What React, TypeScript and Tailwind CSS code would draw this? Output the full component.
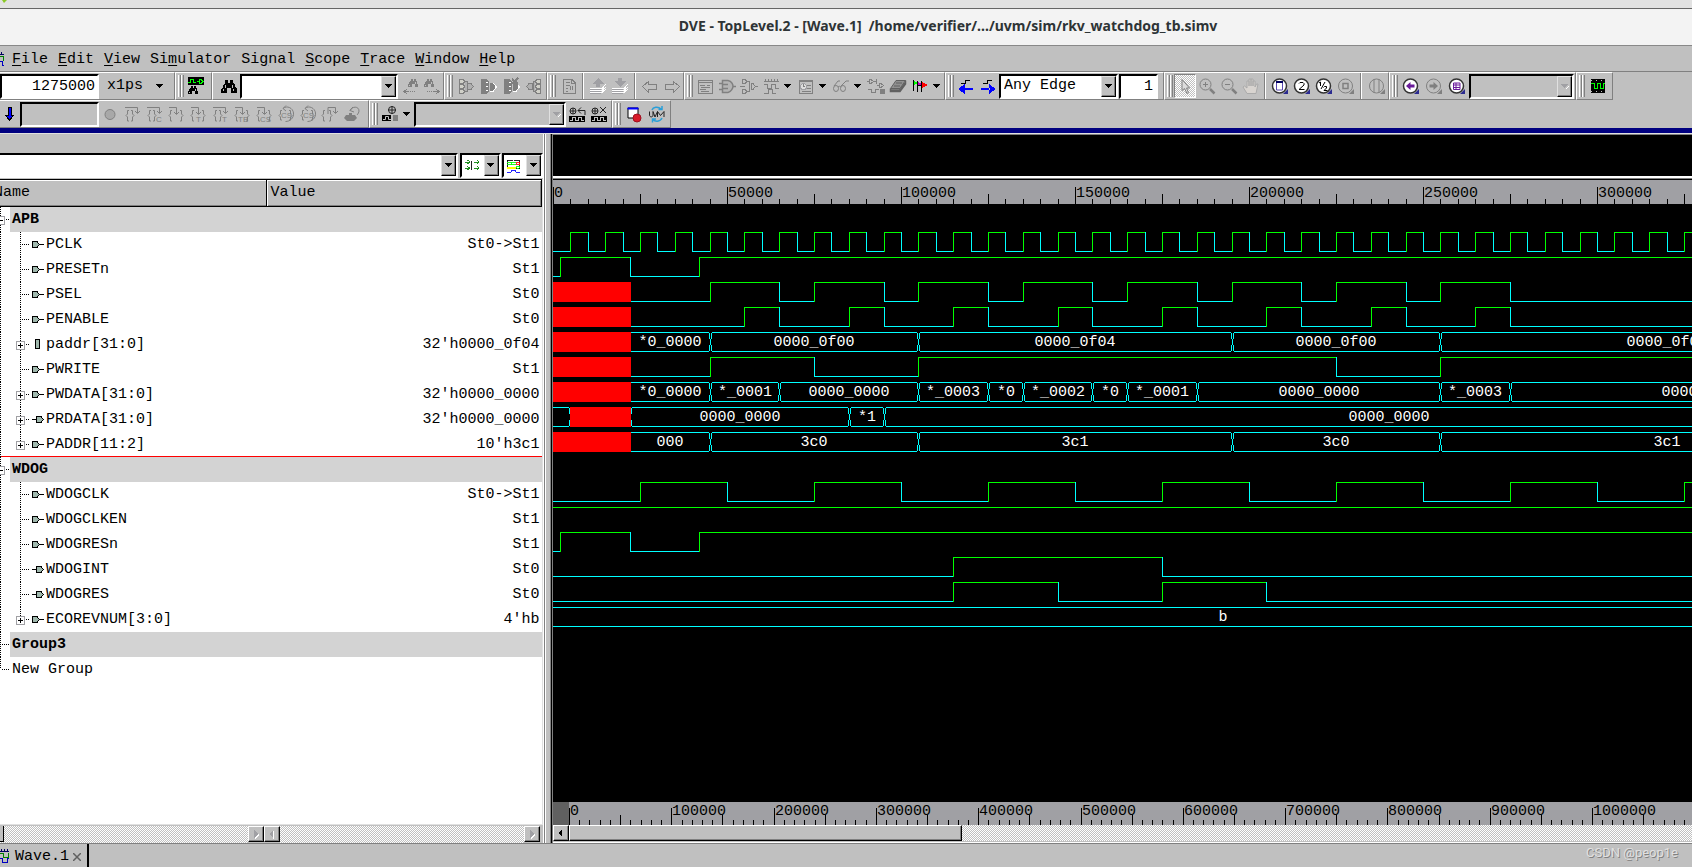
import type { ReactNode } from "react";
import clsx from "clsx";

type BusValue = [start: number, label: string];

type Signal = {
  name: string;
  value: string;
  port: "in" | "out" | "reg";
  /** times (ns) at which a one bit signal toggles, starting low */
  edges?: number[];
  bus?: BusValue[];
  unknown?: [number, number];
};

type Group = { name: string; signals: Signal[] };

const PX_PER_NS = 3.48;
const END = 385;

function clock(first: number, half: number) {
  const edges: number[] = [];
  for (let t = first; t < END; t += half) edges.push(t);
  return edges;
}

const groups: Group[] = [
  {
    name: "APB",
    signals: [
      { name: "PCLK", value: "St0->St1", port: "in", edges: clock(5, 5) },
      { name: "PRESETn", value: "St1", port: "in", edges: [2, 22, 42] },
      {
        name: "PSEL",
        value: "St0",
        port: "in",
        unknown: [0, 22],
        edges: [45, 65, 75, 95, 105, 125, 135, 155, 165, 185, 195, 215, 225, 245, 255, 275],
      },
      {
        name: "PENABLE",
        value: "St0",
        port: "in",
        unknown: [0, 22],
        edges: [55, 65, 85, 95, 115, 125, 145, 155, 175, 185, 205, 215, 235, 245, 265, 275],
      },
      {
        name: "paddr[31:0]",
        value: "32'h0000_0f04",
        port: "reg",
        unknown: [0, 22],
        bus: [[22, "*0_0000"], [45, "0000_0f00"], [105, "0000_0f04"], [195, "0000_0f00"], [255, "0000_0f04"]],
      },
      { name: "PWRITE", value: "St1", port: "in", unknown: [0, 22], edges: [45, 75, 105, 225, 255] },
      {
        name: "PWDATA[31:0]",
        value: "32'h0000_0000",
        port: "in",
        unknown: [0, 22],
        bus: [
          [22, "*0_0000"], [45, "*_0001"], [65, "0000_0000"], [105, "*_0003"], [125, "*0"], [135, "*_0002"],
          [155, "*0"], [165, "*_0001"], [185, "0000_0000"], [255, "*_0003"], [275, "0000_0000"],
        ],
      },
      {
        name: "PRDATA[31:0]",
        value: "32'h0000_0000",
        port: "out",
        unknown: [5, 22],
        bus: [[0, ""], [5, ""], [22, "0000_0000"], [85, "*1"], [95, "0000_0000"]],
      },
      {
        name: "PADDR[11:2]",
        value: "10'h3c1",
        port: "in",
        unknown: [0, 22],
        bus: [[22, "000"], [45, "3c0"], [105, "3c1"], [195, "3c0"], [255, "3c1"]],
      },
    ],
  },
  {
    name: "WDOG",
    signals: [
      { name: "WDOGCLK", value: "St0->St1", port: "in", edges: clock(25, 25) },
      { name: "WDOGCLKEN", value: "St1", port: "in", edges: [-5] },
      { name: "WDOGRESn", value: "St1", port: "in", edges: [2, 22, 42] },
      { name: "WDOGINT", value: "St0", port: "out", edges: [115, 175] },
      { name: "WDOGRES", value: "St0", port: "out", edges: [115, 145, 175, 205] },
      { name: "ECOREVNUM[3:0]", value: "4'hb", port: "in", bus: [[0, "b"]] },
    ],
  },
  { name: "Group3", signals: [] },
];

const toX = (t: number) => Math.round(t * PX_PER_NS) + 0.5;

/* ---------- waveforms ---------- */

function BitWave({ edges = [], unknown }: Signal) {
  const start = unknown ? unknown[1] : 0;
  const points = [start, ...edges, END];
  return (
    <>
      {points.slice(0, -1).map((t, i) => {
        const high = i % 2 === 1;
        const y = high ? 1.5 : 20.5;
        const x = i === 0 ? Math.floor(toX(t)) : toX(t);
        return (
          <path
            key={i}
            d={i === 0 ? `M${x} ${y}H${toX(points[i + 1])}` : `M${x} ${high ? 21 : 1}V${y}H${toX(points[i + 1])}`}
            stroke={high ? "#00ff00" : "#00ffff"}
            fill="none"
          />
        );
      })}
    </>
  );
}

function BusWave({ bus = [] }: Signal) {
  return (
    <>
      {bus.map(([t, label], i) => {
        const end = i + 1 < bus.length ? bus[i + 1][0] : END;
        const a = toX(t);
        const b = toX(end);
        const gap = i === 0 ? 0 : 2;
        return (
          <g key={t}>
            <path d={`M${a + gap - 0.5} 1.5H${b - 1.5}M${a + gap - 0.5} 20.5H${b - 1.5}`} stroke="#00ffff" />
            {i > 0 && (
              <path
                d={`M${a - 1} 2V5M${a - 1} 5L${a + 1} 17V20M${a + 1} 2V5L${a - 1} 17V20`}
                stroke="#00ffff"
                fill="none"
              />
            )}
            <text x={Math.floor((a + b) / 2)} y="15" fill="#fff" textAnchor="middle" fontSize="15">
              {label}
            </text>
          </g>
        );
      })}
    </>
  );
}

function WaveRow({ signal }: { signal: Signal }) {
  const { unknown, bus } = signal;
  return (
    <svg className="block h-[25px] w-full" shapeRendering="crispEdges" role="img" aria-label={`${signal.name} wave`}>
      {bus ? <BusWave {...signal} /> : <BitWave {...signal} />}
      {unknown && (
        <rect
          x={Math.floor(toX(unknown[0]))}
          y="1"
          width={Math.floor(toX(unknown[1])) - Math.floor(toX(unknown[0])) + 1}
          height="20"
          fill="#ff0000"
        />
      )}
    </svg>
  );
}

function Ruler({ step, pitch, count, height, baseline }: { step: number; pitch: number; count: number; height: number; baseline: number }) {
  const ticks = Array.from({ length: count * 10 }, (_, i) => i);
  return (
    <svg className="block h-full min-w-0 flex-1" shapeRendering="crispEdges" role="img" aria-label="Time ruler">
      {ticks.map((i) => {
        const x = Math.round((i * pitch) / 10) + 0.5;
        const h = i % 10 === 0 ? 17 : i % 5 === 0 ? 10 : 5;
        return <path key={i} d={`M${x} ${height}V${height - h}`} stroke="#000" />;
      })}
      {ticks.filter((i) => i % 10 === 0).map((i) => (
        <text key={i} x={Math.round((i * pitch) / 10) + 1} y={baseline} fontSize="15">
          {(i / 10) * step}
        </text>
      ))}
    </svg>
  );
}

/* ---------- signal tree ---------- */

function TreeBranch({ signal, last }: { signal: Signal; last: boolean }) {
  return (
    <svg className="h-[25px] w-[46px] shrink-0" shapeRendering="crispEdges" aria-hidden="true">
      <path d="M.5 0V25" stroke="#000" strokeDasharray="1 1" />
      <path d={last ? "M20.5 0V13" : "M20.5 0V25"} stroke="#000" strokeDasharray="1 1" />
      <path d="M22 12.5H30" stroke="#000" strokeDasharray="1 1" />
      {signal.bus && (
        <>
          <rect x="16.5" y="9.5" width="8" height="8" fill="#fff" stroke="#a0a0a4" />
          <path d="M18 13.5H23M20.5 11V16" stroke="#000" />
        </>
      )}
      {signal.port === "in" && (
        <path d="M32.5 9.5H37L39.5 12.5L37 15.5H32.5ZM39.5 12.5H44" fill="#9fb8ad" stroke="#000" />
      )}
      {signal.port === "out" && (
        <path d="M32 12.5H36M36.5 9.5H41L43.5 12.5L41 15.5H36.5Z" fill="#9fb8ad" stroke="#000" />
      )}
      {signal.port === "reg" && <rect x="35.5" y="7.5" width="4" height="9" fill="#9fb8ad" stroke="#000" />}
    </svg>
  );
}

function GroupBranch({ open, last }: { open?: boolean; last?: boolean }) {
  return (
    <svg className="h-[25px] w-[10px] shrink-0 bg-white" shapeRendering="crispEdges" aria-hidden="true">
      <path d={last ? "M.5 0V12" : "M.5 0V25"} stroke="#000" strokeDasharray="1 1" />
      <path d="M2 12.5H9" stroke="#000" strokeDasharray="1 1" />
      {open && (
        <>
          <rect x="-3.5" y="9.5" width="8" height="8" fill="#fff" stroke="#a0a0a4" />
          <path d="M0 13.5H3" stroke="#000" />
        </>
      )}
    </svg>
  );
}

function SignalTable() {
  return (
    <table className="w-full table-fixed border-collapse text-left">
      <thead>
        <tr className="h-[27px] border-y border-black bg-[#c0c0c0]">
          <th className="w-[266px] border-r border-black p-0 font-normal shadow-[inset_0_1px_0_#fff,inset_0_-1px_0_#808080]">
            <span className="-ml-1.5">Name</span>
          </th>
          <th className="border-r border-black p-0 pl-1 font-normal shadow-[inset_1px_1px_0_#fff,inset_-1px_-1px_0_#808080]">
            Value
          </th>
        </tr>
      </thead>
      {groups.map((group, index) => (
        <tbody key={group.name}>
          <tr>
            <td className={clsx("h-[25px] bg-[#d3d3d3] p-0", index === 1 && "shadow-[0_-1px_0_#f00]")}>
              <div className="flex items-center font-bold">
                <GroupBranch open={group.signals.length > 0} />
                <span className="pl-0.5">{group.name}</span>
              </div>
            </td>
            <td className={clsx("h-[25px] bg-[#d3d3d3] p-0", index === 1 && "shadow-[0_-1px_0_#f00]")} />
          </tr>
          {group.signals.map((signal, i) => (
            <tr key={signal.name}>
              <td className="h-[25px] p-0">
                <div className="flex items-center">
                  <TreeBranch signal={signal} last={i === group.signals.length - 1} />
                  <span>{signal.name}</span>
                </div>
              </td>
              <td className="h-[25px] p-0 pr-0.5 text-right">{signal.value}</td>
            </tr>
          ))}
        </tbody>
      ))}
      <tbody>
        <tr>
          <td className="h-[25px] p-0">
            <div className="flex items-center">
              <GroupBranch last />
              <span className="pl-0.5">New Group</span>
            </div>
          </td>
          <td />
        </tr>
      </tbody>
    </table>
  );
}

/* ---------- toolbar parts ---------- */

function Caret({ disabled }: { disabled?: boolean }) {
  return (
    <svg width="8" height="5" viewBox="0 0 8 5" shapeRendering="crispEdges" aria-hidden="true">
      {disabled && <path d="M5 4L8 1V3L5 5Z" fill="#fff" />}
      <path d="M0 0H7L3.5 4Z" fill={disabled ? "#a0a0a4" : "#000"} />
    </svg>
  );
}

function Combo({
  label,
  value = "",
  className,
  disabled,
  children,
}: {
  label: string;
  value?: string;
  className: string;
  disabled?: boolean;
  children?: ReactNode;
}) {
  return (
    <span
      className={clsx(
        "flex h-[25px] shrink-0 items-stretch border-2 border-t-black border-l-black border-r-white border-b-white",
        disabled ? "bg-[#c0c0c0]" : "bg-white",
        className,
      )}
    >
      {children}
      <select
        aria-label={label}
        disabled={disabled}
        className="min-w-0 flex-1 appearance-none bg-transparent pl-[3px] leading-5 text-black outline-none"
      >
        <option>{value}</option>
      </select>
      <span className="pointer-events-none flex w-[15px] shrink-0 items-center justify-center border border-t-[#e0e0e0] border-r-black border-b-black border-l-[#e0e0e0] bg-[#c0c0c0] shadow-[inset_-1px_-1px_0_#808080]">
        <Caret disabled={disabled} />
      </span>
    </span>
  );
}

function ToolGroup({ children, handle = true, className }: { children: ReactNode; handle?: boolean; className?: string }) {
  return (
    <div
      className={clsx(
        "flex h-7 shrink-0 items-center border-t border-r border-b border-t-white border-r-[#808080] border-b-[#808080]",
        handle && "border-l border-l-white",
        className,
      )}
    >
      {handle && (
        <span className="mr-px ml-0.5 flex h-[22px] w-[6px] shrink-0">
          <span className="w-[3px] border-r border-l border-l-white border-r-[#808080]" />
          <span className="w-[3px] border-r border-l border-l-white border-r-[#808080]" />
        </span>
      )}
      {children}
    </div>
  );
}

function Tool({ label, children, className = "w-[22px]" }: { label: string; children: ReactNode; className?: string }) {
  return (
    <button type="button" aria-label={label} title={label} className={clsx("flex h-[22px] shrink-0 items-center justify-center", className)}>
      {children}
    </button>
  );
}

function Drop({ label }: { label: string }) {
  return (
    <button type="button" aria-label={label} className="flex h-[22px] w-[13px] shrink-0 items-center pl-0.5">
      <Caret />
    </button>
  );
}

function Divider({ className }: { className?: string }) {
  return <span className={clsx("h-[26px] w-0.5 shrink-0 border-r border-l border-l-[#808080] border-r-white", className)} />;
}

function Icon({ children, crisp = true }: { children: ReactNode; crisp?: boolean }) {
  return (
    <svg
      width="18"
      height="18"
      viewBox="0 0 18 18"
      fill="none"
      stroke="#808080"
      shapeRendering={crisp ? "crispEdges" : "auto"}
      aria-hidden="true"
    >
      {children}
    </svg>
  );
}

function Binoculars({ color, x = 0, y = 0, size = 1 }: { color: string; x?: number; y?: number; size?: number }) {
  return (
    <g transform={`translate(${x} ${y}) scale(${size})`} stroke="none">
      <path d="M4 1H7V4H9V1H12V4L14 6V8L16 10V14H10V9H6V14H0V10L2 8V6L4 4Z" fill={color} />
      <path d="M4 6H5V9H4ZM2 10H3V12H2ZM11 6H12V9H11ZM12 10H13V12H12Z" fill="#c0c0c0" />
    </g>
  );
}

/** Source stepping icon: a pair of braces with a curved arrow and a suffix. */
function StepIcon({ mode, sub = "" }: { mode: "over" | "into" | "out" | "loop"; sub?: string }) {
  return (
    <Icon crisp={false}>
      {mode === "over" && (
        <>
          <path d="M2 2.5H14.5V8M12 6L14.5 8.5L17 6" />
          <path d="M6 5.5H4.5V9L3 10.5L4.5 12V16H6M8 5.5H9.5V9L11 10.5L9.5 12V16H8" />
        </>
      )}
      {mode === "into" && (
        <>
          <path d="M2 2.5H9.5V9M7 7L9.5 9.5L12 7" />
          <path d="M5 5.5H3.5V9L2 10.5L3.5 12V16H5M13 5.5H14.5V9L16 10.5L14.5 12V16H13" />
        </>
      )}
      {mode === "out" && (
        <>
          <path d="M7 9V2.5H14.5V8M12 6L14.5 8.5L17 6" />
          <path d="M4 5.5H2.5V9L1 10.5L2.5 12V16H4M8 5.5H9.5V9L11 10.5L9.5 12V16H8" />
        </>
      )}
      {mode === "loop" && (
        <>
          <path d="M6 3.5C10 0 16 3 16.5 8C17 13 13 16.5 8.5 16.5M9 .5L6 3.5L9 6" />
          <path d="M5 5.5H3.5V9L2 10.5L3.5 12V15H5M12 5.5H13.5V9L15 10.5L13.5 12V15H12" />
        </>
      )}
      {sub && (
        <text
          x={mode === "loop" ? 4 : mode === "over" ? 11 : sub.length > 1 ? 5 : 7}
          y={mode === "loop" ? 13 : 17}
          fontSize="8"
          fill="#808080"
          stroke="none"
          className="font-[Liberation_Sans,sans-serif]"
        >
          {sub}
        </text>
      )}
    </Icon>
  );
}

function Lens({ active, children }: { active?: boolean; children: ReactNode }) {
  return (
    <Icon crisp={false}>
      <circle cx="8.5" cy="9" r="7" fill={active ? "#fff" : "none"} stroke={active ? "#333" : "#808080"} strokeWidth={active ? 1.5 : 1} />
      <path d="M17 12V17H12Z" fill={active ? "#2b2b90" : "#808080"} stroke="none" />
      {children}
    </Icon>
  );
}

function GateFan({ flip }: { flip?: boolean }) {
  return (
    <Icon>
      <g transform={flip ? "matrix(-1 0 0 1 18 0)" : undefined}>
        <path d="M2.5 2.5H6L8 4.5L6 6.5H2.5ZM2.5 7.5H6L8 9.5L6 11.5H2.5ZM2.5 12.5H6L8 14.5L6 16.5H2.5Z" fill="#d0d0c8" />
        <path d="M8 4.5H10V14.5H8M10.5 6.5H14L16.5 9.5L14 12.5H10.5Z" fill="#b0b0b0" />
      </g>
    </Icon>
  );
}

function GateSolid({ cut }: { cut?: boolean }) {
  return (
    <Icon>
      <path d="M1 2H6L9 5V14L6 17H1Z" fill="#808080" stroke="none" />
      <path d="M5.5 5.5H8M5.5 9.5H8M5.5 13.5H8M10 6.5H13L16.5 10L13 14.5H9.5" stroke="#fff" />
      <path d="M10 6H12L15 9V11L12 14H10Z" fill="#808080" stroke="none" />
      {cut && <path d="M9 2L15 7M15 1L9 7" strokeWidth="2" />}
    </Icon>
  );
}

function Stack({ up }: { up?: boolean }) {
  return (
    <Icon>
      <path d={up ? "M9 1L15 7H11V10H7V7H3Z" : "M7 1H11V4H15L9 10L3 4H7Z"} fill="#a0a0a4" stroke="none" />
      <path d="M1 11.5H13L17 7M1 13.5H13L17 10M1 15.5H13L17 12" stroke="#fff" />
      <path d="M1 12.5H12M1 14.5H12M1 16.5H12" stroke="#a0a0a4" />
    </Icon>
  );
}

function WaveProbe({ cross }: { cross?: boolean }) {
  return (
    <Icon crisp={false}>
      <circle cx="5" cy="6" r="3" stroke="#222" />
      <path d="M5 3V9M2 6H8" stroke="#222" />
      <path d={cross ? "M10 2L16 8M16 2L10 8" : "M17 10V5.5H10M13 2.5L10 5.5L13 8.5"} stroke="#222" />
      <path d="M1 11H17V17H1Z" fill="#000" stroke="none" />
      <path d="M2 15.5H4.5V12.5H7.5V15.5H10.5V12.5H13.5V15.5H16" stroke="#c0c0c0" shapeRendering="crispEdges" />
    </Icon>
  );
}

function EdgeArrow({ next }: { next?: boolean }) {
  return (
    <Icon>
      <path d="M4 6.5H8.5V3.5H13" stroke="#000" />
      <path d={next ? "M17 12L10 7V17ZM2 11H11V13H2Z" : "M1 12L8 7V17ZM7 11H16V13H7Z"} fill="#00f" stroke="none" />
    </Icon>
  );
}

function WaveLogo() {
  return (
    <svg width="9" height="16" viewBox="0 0 9 16" fill="none" shapeRendering="crispEdges" aria-hidden="true">
      <path d="M0 2.5H9M1.5 0V3M4.5 0V3M7.5 0V3" stroke="#000060" />
      <path d="M0 4.5H3.5V8.5H8V4" stroke="#008000" />
      <path d="M0 9.5H2.5V13.5H7V9.5H9" stroke="#0000c0" />
    </svg>
  );
}

/* ---------- toolbars ---------- */

function MainToolbar() {
  return (
    <div className="flex h-7 overflow-hidden" role="toolbar" aria-label="Main">
      <ToolGroup handle={false} className="w-[175px]">
        <input
          aria-label="Time"
          defaultValue="1275000"
          className="h-[25px] w-[99px] border-2 border-t-black border-r-white border-b-white border-l-black bg-white pr-0.5 text-right outline-none"
        />
        <button type="button" className="flex h-[22px] items-center gap-[13px] pl-2">
          x1ps
          <Caret />
        </button>
      </ToolGroup>
      <ToolGroup className="w-[37px]">
        <Tool label="Find signals">
          <Icon>
            <path d="M1 0H17V8H1Z" fill="#000" stroke="none" />
            <path d="M1 5.5H3.5V2.5H6.5V5.5H9M10 4.5H12V2.5H14L16 4.5L14 6.5H12V4.5" stroke="#0f0" />
            <Binoculars color="#000" x={1} y={8} size={0.65} />
          </Icon>
        </Tool>
      </ToolGroup>
      <ToolGroup handle={false} className="w-[232px] border-l border-l-white pl-[5px]">
        <Tool label="Find">
          <Icon>
            <Binoculars color="#000" x={1} y={2} />
          </Icon>
        </Tool>
        <Combo label="Find text" className="w-[158px]" />
        <Tool label="Find previous" className="ml-0.5 w-[22px]">
          <Icon>
            <Binoculars color="#808080" x={6} y={1} size={0.65} />
            <path d="M2 14.5H7" />
            <path d="M8 14.5H14" strokeDasharray="1 1" />
            <path d="M5 12L2 14.5L5 17" />
          </Icon>
        </Tool>
        <Tool label="Find next" className="w-[20px]">
          <Icon>
            <Binoculars color="#808080" x={1} y={1} size={0.65} />
            <path d="M4 14.5H11" strokeDasharray="1 1" />
            <path d="M10 14.5H16M13 12L16 14.5L13 17" />
          </Icon>
        </Tool>
      </ToolGroup>
      <ToolGroup className="w-[103px]">
        <Tool label="Trace drivers" className="w-[23px]"><GateFan /></Tool>
        <Tool label="Trace loads" className="w-[23px]"><GateSolid /></Tool>
        <Tool label="Clear trace" className="w-[23px]"><GateSolid cut /></Tool>
        <Tool label="Fan out"><GateFan flip /></Tool>
      </ToolGroup>
      <ToolGroup className="w-[137px]">
        <Tool label="Show source" className="w-[23px]">
          <Icon>
            <path d="M3.5 2.5H12L15.5 6V16.5H3.5ZM11.5 2.5V6.5H15.5M6 5.5H10M6 8.5H10M6 11.5H8M6 14.5H8M10.5 9V13M12.5 9V13" />
          </Icon>
        </Tool>
        <Divider className="ml-0.5" />
        <Tool label="Move up" className="ml-[3px] w-[22px]"><Stack up /></Tool>
        <Tool label="Move down"><Stack /></Tool>
        <Divider className="ml-[3px]" />
        <Tool label="Back" className="ml-0.5 w-[23px]">
          <Icon><path d="M1.5 9.5L7.5 4.5V7.5H15.5V12.5H7.5V15.5Z" /></Icon>
        </Tool>
        <Tool label="Forward">
          <Icon><path d="M16.5 9.5L10.5 4.5V7.5H2.5V12.5H10.5V15.5Z" /></Icon>
        </Tool>
      </ToolGroup>
      <ToolGroup className="w-[261px]">
        <Tool label="New source view">
          <Icon><path d="M2.5 3.5H16.5V16.5H2.5ZM2.5 5.5H16.5M4 8.5H9M5 10.5H14M4 12.5H10M5 14.5H13M11 8.5H14" /></Icon>
        </Tool>
        <Tool label="New schematic view">
          <Icon crisp={false}>
            <path d="M4.5 3.5H10C14 4 15 8 15 9.5C15 11 13 15 10 15.5H4.5ZM1 6.5H4M1 12.5H4M15 9.5H18M5 7.5H10M5 11.5H10" strokeWidth="1.5" fill="#b4b4b4" />
          </Icon>
        </Tool>
        <Tool label="New path schematic">
          <Icon>
            <path d="M2.5 2.5H5L7 4.5L5 6.5H2.5ZM2.5 12.5H5L7 14.5L5 16.5H2.5ZM7 4.5H9.5V14.5H7M11.5 6.5H13L15.5 9.5L13 12.5H11.5ZM0 9.5H5M15.5 9.5H18" />
          </Icon>
        </Tool>
        <Tool label="New wave view">
          <Icon>
            <path d="M2 4.5H17M3.5 2V5M6.5 2V5M9.5 2V5M12.5 2V5M15.5 2V5" />
            <path d="M2 7.5H5.5V11.5H9.5V7.5H13.5V11.5H17M2 16.5H6.5V12.5H10.5V16.5H14" />
          </Icon>
        </Tool>
        <Drop label="Wave view menu" />
        <Tool label="New list view">
          <Icon>
            <path d="M2 3H16V5H2Z" fill="#808080" stroke="none" />
            <path d="M2.5 3.5H15.5V16.5H2.5ZM10 8.5H14M10 11.5H14M5 14.5H14" />
            <circle cx="6.5" cy="9.5" r="3" fill="#ddd" stroke="#a0a0a4" />
            <path d="M6.5 7V9.5H8" />
          </Icon>
        </Tool>
        <Drop label="List view menu" />
        <Tool label="Watch">
          <Icon crisp={false}>
            <path d="M2 9L6 4H8M9 9L14 4H17" />
            <ellipse cx="4" cy="11.5" rx="2.5" ry="3" />
            <ellipse cx="11" cy="11.5" rx="2.5" ry="3" />
            <path d="M6 10C7 9 8 9 9 10" />
          </Icon>
        </Tool>
        <Drop label="Watch menu" />
        <Tool label="Group signals">
          <Icon>
            <path d="M2.5 2.5H4L6.5 4.5L4 6.5H2.5ZM0 4.5H2M7 4.5H9.5M9.5 2V7M12.5 6.5H14L16.5 8.5L14 10.5H12.5ZM9.5 8.5H12" />
            <path d="M1 12.5H4.5V15.5H8.5V12.5H12" />
            <path d="M13 12H17V16H13Z" fill="#808080" />
          </Icon>
        </Tool>
        <Tool label="Memory view">
          <Icon crisp={false}>
            <path d="M7 3.5H16.5L11 11.5H1.5Z" fill="#909090" stroke="#606060" />
            <path d="M1.5 11.5V14.5H11L16.5 7V3.5M11 11.5V14.5M2 13H11L16 6" stroke="#606060" strokeWidth="1.5" />
            <path d="M7 6H13M5 9H11" stroke="#606060" />
          </Icon>
        </Tool>
        <Tool label="Markers">
          <Icon>
            <path d="M2 3L7 6L2 9Z" fill="#0f0" stroke="none" />
            <path d="M6 4L11 7L6 10Z" fill="#c000c0" stroke="none" />
            <path d="M11 5L17 8L11 11Z" fill="#f00" stroke="none" />
            <path d="M2.5 3V14M6.500 4V15M10.500 4V15M7 8.500H10" stroke="#000" />
          </Icon>
        </Tool>
        <Drop label="Marker menu" />
      </ToolGroup>
      <ToolGroup className="w-[219px]">
        <Tool label="Previous edge"><EdgeArrow /></Tool>
        <Tool label="Next edge"><EdgeArrow next /></Tool>
        <Combo label="Edge type" value="Any Edge" className="w-[119px]" />
        <input
          aria-label="Edge count"
          defaultValue="1"
          className="ml-px h-[25px] w-[39px] border-2 border-t-black border-r-white border-b-white border-l-black bg-white pr-[3px] text-right outline-none"
        />
      </ToolGroup>
      <ToolGroup className="w-[225px]">
        <button
          type="button"
          aria-label="Select"
          aria-pressed="true"
          className="flex h-6 w-[22px] shrink-0 items-center justify-center border border-t-[#808080] border-r-white border-b-white border-l-[#808080] bg-[repeating-conic-gradient(#c0c0c0_0_25%,#fff_0_50%)] bg-[length:2px_2px]"
        >
          <Icon crisp={false}>
            <path d="M6 2.5V13.5L8.5 11.5L11 16.5L12.5 15.5L10.5 11H13.5Z" fill="#ddd" />
          </Icon>
        </button>
        <Tool label="Zoom in">
          <Icon crisp={false}>
            <circle cx="7.5" cy="7.5" r="5.5" />
            <path d="M5 7.5H10M7.5 5V10" />
            <path d="M12 12L16.5 16.5" strokeWidth="2.5" />
          </Icon>
        </Tool>
        <Tool label="Zoom out">
          <Icon crisp={false}>
            <circle cx="7.5" cy="7.5" r="5.5" />
            <path d="M5 7.5H10" />
            <path d="M12 12L16.5 16.5" strokeWidth="2.5" />
          </Icon>
        </Tool>
        <Tool label="Pan">
          <Icon crisp={false}>
            <path
              d="M5 16.5L1 10L2.5 9L5 11V4H7V9V2H9V9V2H11V9V4H13V10L14.5 7H16L14 16.5Z"
              fill="#d8d4d0"
              stroke="#aaa"
            />
          </Icon>
        </Tool>
        <Divider className="ml-0.5" />
        <Tool label="Zoom full" className="ml-[3px] w-[22px]">
          <Lens active>
            <path d="M5.5 5.5H11.5V13H5.5Z" stroke="#5a4ab0" />
            <path d="M5 5H12" stroke="#000060" strokeWidth="2" />
          </Lens>
        </Tool>
        <Tool label="Zoom 2x">
          <Lens active>
            <path d="M6 6.5L7 5.5H10L11 6.5V8L6 12.5H11.5" stroke="#000" />
          </Lens>
        </Tool>
        <Tool label="Zoom half">
          <Lens active>
            <path d="M4 6L5.5 5V9M6 12L10 5M8.5 10.5L9.5 9.5H11.5V11L9 13.5H12.5" stroke="#000" />
          </Lens>
        </Tool>
        <Tool label="Zoom to selection">
          <Lens>
            <path d="M6 6.5H11V11.5H6Z" strokeWidth="1.5" />
          </Lens>
        </Tool>
        <Divider className="ml-[3px]" />
        <Tool label="Zoom to cursors" className="ml-1 w-[22px]">
          <Lens>
            <path d="M6 2V16M11 2V16" />
          </Lens>
        </Tool>
      </ToolGroup>
      <ToolGroup className="w-[187px]">
        <Tool label="Zoom back" className="w-[23px]">
          <Lens active>
            <path d="M4 9L8.5 5V7.5H12.5V10.5H8.5V13Z" fill="#6a1b9a" stroke="none" />
          </Lens>
        </Tool>
        <Tool label="Zoom forward" className="w-[23px]">
          <Lens>
            <path d="M13 9L8.5 5V7.5H4.5V10.5H8.5V13Z" fill="#808080" stroke="none" />
          </Lens>
        </Tool>
        <Tool label="Named zooms" className="w-[23px]">
          <Lens active>
            <path d="M5.5 6H12V12.5H5.5ZM5.5 8H12M5.5 10.5H12M8 6V12.5" stroke="#6a1b9a" />
          </Lens>
        </Tool>
        <Combo label="Zoom name" disabled className="ml-px w-[105px]" />
      </ToolGroup>
      <ToolGroup className="w-[37px]">
        <Tool label="Waveform" className="w-[24px]">
          <Icon>
            <path d="M2 2H16V16H2Z" fill="#000" stroke="none" />
            <path d="M2 3.5H16M2 14.5H16" stroke="#c0c0c0" strokeDasharray="1 4" />
            <path d="M2 6.5H5.5V11.5H8.5V6.5H11.5V11.5H14.5V6.5H16" stroke="#0f0" />
          </Icon>
        </Tool>
      </ToolGroup>
    </div>
  );
}

function SimToolbar() {
  return (
    <div className="flex h-7 overflow-hidden" role="toolbar" aria-label="Simulator">
      <ToolGroup handle={false} className="w-[369px]">
        <Tool label="Run" className="w-[20px]">
          <svg width="10" height="14" viewBox="0 0 10 14" shapeRendering="crispEdges" aria-hidden="true">
            <path d="M3 0H6V8H9L4.5 13L0 8H3Z" fill="#00f" stroke="#000" />
          </svg>
        </Tool>
        <input
          aria-label="Run length"
          disabled
          className="h-[25px] w-[79px] border-2 border-t-black border-r-white border-b-white border-l-black bg-[#c0c0c0]"
        />
        <Tool label="Stop">
          <Icon crisp={false}><circle cx="9" cy="9.5" r="5" fill="#a8a8a8" /></Icon>
        </Tool>
        <Tool label="Step over"><StepIcon mode="over" /></Tool>
        <Tool label="Step over C"><StepIcon mode="over" sub="C" /></Tool>
        <Tool label="Step"><StepIcon mode="into" /></Tool>
        <Tool label="Step thread"><StepIcon mode="into" sub="T" /></Tool>
        <Tool label="Step over thread"><StepIcon mode="over" sub="T" /></Tool>
        <Tool label="Step testbench"><StepIcon mode="into" sub="TB" /></Tool>
        <Tool label="Step constraint"><StepIcon mode="into" sub="CS" /></Tool>
        <Tool label="Re-solve"><StepIcon mode="loop" sub="CS" /></Tool>
        <Tool label="Re-solve all"><StepIcon mode="loop" sub="CS" /></Tool>
        <Tool label="Step out"><StepIcon mode="out" /></Tool>
        <Tool label="Restart">
          <Icon crisp={false}>
            <path d="M7 5.5C9 1 16 1 16 6C16 7 15 9 14 10M10 2L7 5.5L11 7" />
            <path d="M6 8H9V10H12L14 13L11 16H4L1 13L3 10H6Z" fill="#808080" stroke="none" />
          </Icon>
        </Tool>
      </ToolGroup>
      <ToolGroup className="w-[243px]">
        <Tool label="Add probe">
          <Icon crisp={false}>
            <circle cx="11" cy="5" r="3.5" stroke="#222" />
            <path d="M11 1V9M7 5H15" stroke="#222" />
            <path d="M1 10H10V16H1Z" fill="#000" stroke="none" />
            <path d="M2 14.5H4.5V11.5H7.5V14.5H10" stroke="#c0c0c0" />
            <path d="M12 10H17V16H12Z" fill="#808080" stroke="none" />
          </Icon>
        </Tool>
        <Drop label="Probe menu" />
        <Combo label="Probe" disabled className="w-[152px]" />
        <Tool label="Restore waves"><WaveProbe /></Tool>
        <Tool label="Delete waves"><WaveProbe cross /></Tool>
      </ToolGroup>
      <ToolGroup className="w-[59px]">
        <Tool label="Record window" className="w-[23px]">
          <Icon crisp={false}>
            <path d="M3 3H13V13H3Z" fill="#fff" stroke="#000" />
            <path d="M2.5 3.5H13.5" stroke="#00f" strokeWidth="2" />
            <circle cx="12" cy="13" r="4" fill="#d81b2a" stroke="#a01020" />
          </Icon>
        </Tool>
        <Tool label="UVM" className="w-[24px]">
          <Icon crisp={false}>
            <path d="M4 5C5 2 10 1 13 4M14 1V4.5H10.5M14 13C12 17 7 17 5 14.5M4.5 17.5V14H8" stroke="#2a9fd8" strokeWidth="1.5" />
            <path d="M1.5 6.5V10C1.5 12.5 5 12.5 5 10V6.5L7 12L9.5 6.5M9.5 12V6.5L12.5 10.5L16 6.5V12" stroke="#222" />
          </Icon>
        </Tool>
      </ToolGroup>
    </div>
  );
}

const menus: [string, string, string][] = [
  ["", "F", "ile"],
  ["", "E", "dit"],
  ["", "V", "iew"],
  ["Si", "m", "ulator"],
  ["Si", "g", "nal"],
  ["", "S", "cope"],
  ["", "T", "race"],
  ["", "W", "indow"],
  ["", "H", "elp"],
];

function ScrollButton({ dir, disabled }: { dir: "left" | "right"; disabled?: boolean }) {
  return (
    <button
      type="button"
      aria-label={`Scroll ${dir}`}
      className="flex h-4 w-4 shrink-0 items-center justify-center border border-t-white border-r-black border-b-black border-l-white bg-[#c0c0c0] shadow-[inset_-1px_-1px_0_#808080]"
    >
      <svg width="6" height="9" viewBox="0 0 6 9" shapeRendering="crispEdges" aria-hidden="true">
        {disabled && <path d={dir === "left" ? "M4 1H5V9H4Z" : "M5 4H6V6L2 9V8Z"} fill="#fff" />}
        <path d={dir === "left" ? "M4 0V8L0 4Z" : "M1 0V8L5 4Z"} fill={disabled ? "#a0a0a4" : "#000"} />
      </svg>
    </button>
  );
}

const track = "bg-[repeating-conic-gradient(#c0c0c0_0_25%,#fff_0_50%)] bg-[length:2px_2px]";

function SignalPane() {
  return (
    <section className="flex w-[543px] shrink-0 flex-col" aria-label="Signals">
      <div className="flex h-[45px] items-start justify-between pt-[19px]">
        <Combo label="Signal filter" className="w-[458px] border-l-0" />
        <Combo label="Insert position" className="w-[41px]">
          <svg width="22" height="21" viewBox="0 0 22 21" fill="none" shapeRendering="crispEdges" aria-hidden="true">
            <path d="M3 6.5H9M6 4L9 6.5L6 9M3 13.5H9M6 11L9 13.5L6 16M14 6.5H20M17 4L20 6.5L17 9M14 13.5H20M17 11L20 13.5L17 16" stroke="#008000" />
            <path d="M11.5 5V16" stroke="#000" />
          </svg>
        </Combo>
        <Combo label="Display filter" className="w-[41px]">
          <svg width="22" height="21" viewBox="0 0 22 21" fill="none" shapeRendering="crispEdges" aria-hidden="true">
            <path d="M3.5 4.5H18.5V14.5H3.5Z" stroke="#000" strokeDasharray="3 1" />
            <path d="M4 7.5H14M4 9.5H14M8.5 7V10" stroke="#0f0" />
            <path d="M4 13H14" stroke="#ff0" strokeWidth="2" />
            <path d="M14.5 6.5H17.5V9.5H14.5Z" stroke="#f00" />
            <path d="M14.5 11.5H17.5V13.5H14.5Z" stroke="#0f0" />
            <path d="M4 18.5H8.5V16.5H13.5V18.5H18" stroke="#00f" />
          </svg>
        </Combo>
      </div>
      <div className="flex-1 border-r border-b border-[#e0e0e0] bg-white">
        <SignalTable />
      </div>
      <div className="mt-px flex h-[17px] pr-[3px]">
        <span className={clsx("min-w-0 flex-[248]", track)}>
          <span className="block h-4 w-1 border-r border-b border-black bg-[#c0c0c0]" />
        </span>
        <ScrollButton dir="right" disabled />
        <ScrollButton dir="left" disabled />
        <span className={clsx("min-w-0 flex-[244]", track)} />
        <ScrollButton dir="right" disabled />
      </div>
    </section>
  );
}

function WavePane() {
  return (
    <section className="flex min-w-0 flex-1 flex-col border-t border-[#808080]" aria-label="Waves">
      <div className="h-[41px] bg-black" />
      <div className="h-1 border-t-2 border-b border-t-white border-b-black bg-[#808080]" />
      <div className="flex h-6 bg-[#a0a0a4]">
        <Ruler step={50000} pitch={174} count={7} height={24} baseline={17} />
      </div>
      <div className="flex-1 overflow-hidden bg-black pt-0.5">
        {groups.map((group) => (
          <div key={group.name} className="pt-[25px]">
            {group.signals.map((signal) => (
              <WaveRow key={signal.name} signal={signal} />
            ))}
          </div>
        ))}
      </div>
      <div className="flex h-[23px] bg-[#a0a0a4]">
        <span className="w-4 bg-[#606060]" />
        <Ruler step={100000} pitch={102.3} count={12} height={23} baseline={13} />
      </div>
      <div className={clsx("flex h-4", track)}>
        <ScrollButton dir="left" />
        <span className="w-[393px] border border-t-white border-r-black border-b-black border-l-white bg-[#c0c0c0] shadow-[inset_-1px_-1px_0_#808080]" />
      </div>
      <div className="h-0.5 border-b border-white" />
    </section>
  );
}

export default function App() {
  return (
    <div className="flex min-h-screen flex-col overflow-hidden bg-[#c0c0c0] font-[Liberation_Mono,monospace] text-[15px] leading-5 text-black">
      <div className="flex h-[9px] items-end border-b border-[#666] bg-[#e2e2e2] pb-1 pl-0.5">
        <svg width="5" height="4" viewBox="0 0 5 4" aria-hidden="true">
          <path d="M0 0H5L2 3Z" fill="#8ac926" />
        </svg>
      </div>
      <header className="flex h-[37px] items-center justify-center border-b border-[#888] bg-[#f3f3f3] pl-[204px]">
        <h1 className="pb-0.5 font-[Noto_Sans,sans-serif] text-sm font-bold whitespace-pre text-[#2e3436]">
          {"DVE - TopLevel.2 - [Wave.1]  /home/verifier/.../uvm/sim/rkv_watchdog_tb.simv"}
        </h1>
      </header>
      <nav className="flex h-[26px] items-center border-b border-[#808080] pt-0.5" aria-label="Menu bar">
        <span className="w-3 shrink-0">
          <span className="block w-1 overflow-hidden">
            <WaveLogo />
          </span>
        </span>
        {menus.map(([before, key, after]) => (
          <button key={before + key + after} type="button" className="mr-[10px]">
            {before}
            <span className="underline underline-offset-2">{key}</span>
            {after}
          </button>
        ))}
      </nav>
      <MainToolbar />
      <SimToolbar />
      <div className="h-[5px] bg-[#000080]" />
      <main className="flex flex-1 border-t border-[#e0e0e0]">
        <SignalPane />
        <div className="flex w-[10px] shrink-0 cursor-col-resize border-l border-white" role="separator" aria-orientation="vertical">
          <span className="w-0.5 border-r border-l border-l-[#808080] border-r-white" />
          <span className="flex-1" />
          <span className="w-[3px] border-r border-l border-[#808080] bg-black" />
        </div>
        <WavePane />
      </main>
      <footer className="flex h-6 items-center justify-between border-t border-[#808080]">
        <div className="flex h-full w-[89px] items-center gap-1 border-r-2 border-black pt-0.5">
          <WaveLogo />
          <span className="ml-0.5">Wave.1</span>
          <button type="button" aria-label="Close Wave.1" className="text-[#606060]">
            <svg width="8" height="8" viewBox="0 0 8 8" stroke="currentColor" strokeWidth="1.5" aria-hidden="true">
              <path d="M0 0L8 8M8 0L0 8" />
            </svg>
          </button>
        </div>
        <span className="pr-[14px] pb-1.5 font-[Roboto,sans-serif] text-[13px] text-[#e0e0e0] [text-shadow:1px_1px_0_#808080]">
          CSDN @peop1e
        </span>
      </footer>
    </div>
  );
}
